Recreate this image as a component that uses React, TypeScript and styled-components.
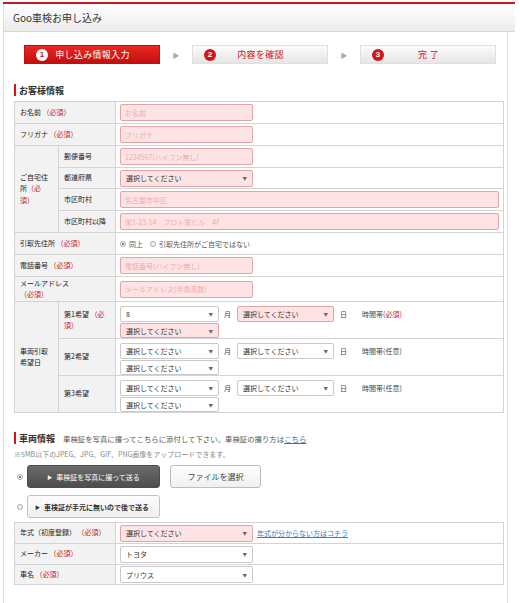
import styled, { createGlobalStyle } from "styled-components";

const GlobalStyle = createGlobalStyle`
  html, body { margin: 0; padding: 0; background: #fff; }
  body {
    font-family: "Noto Sans CJK JP", "Noto Sans", sans-serif;
    color: #333;
  }
  * { box-sizing: border-box; }
`;

const Page = styled.div`
  padding: 2px 0 0 3px;
`;

const Frame = styled.div`
  width: 512px;
  border-top: 2px solid #c9171e;
`;

const Header = styled.div`
  height: 28px;
  display: flex;
  align-items: center;
  padding-left: 9px;
  font-size: 10px;
  color: #333;
  background: linear-gradient(#ffffff, #ececec);
  border-left: 1px solid #ddd;
  border-bottom: 1px solid #d8d8d8;
`;

const Body = styled.div`
  width: 505px;
  min-height: 580px;
  padding: 13px 0 20px 10px;
  border-left: 1px solid #ddd;
  border-right: 1px solid #e2e2e2;
`;

const Steps = styled.div`
  display: flex;
  align-items: center;
  padding-left: 10px;
`;

const Step = styled.div<{ $active?: boolean }>`
  width: 136px;
  height: 19px;
  display: flex;
  align-items: center;
  padding: 0 22px 0 11px;
  font-size: 9px;
  color: ${(p) => (p.$active ? "#fff" : "#d3141b")};
  background: ${(p) =>
    p.$active
      ? "linear-gradient(#e8291f, #c30e10)"
      : "linear-gradient(#fbfbfb, #e6e6e6)"};
  border: 1px solid ${(p) => (p.$active ? "#c30e10" : "#e0e0e0")};
`;

const StepNum = styled.span<{ $active?: boolean }>`
  width: 12px;
  height: 12px;
  border-radius: 50%;
  flex: none;
  display: flex;
  align-items: center;
  justify-content: center;
  font-size: 8px;
  font-weight: bold;
  font-family: "Liberation Sans", sans-serif;
  background: ${(p) => (p.$active ? "#fff" : "#d3141b")};
  color: ${(p) => (p.$active ? "#d3141b" : "#fff")};
`;

const StepText = styled.span`
  flex: 1;
  text-align: center;
  letter-spacing: 0.3px;
`;

const StepArrow = styled.span`
  width: 32px;
  text-align: center;
  font-size: 7px;
  color: #aaa;
`;

const SectionTitle = styled.div<{ $big?: boolean }>`
  display: flex;
  align-items: center;
  height: 12px;
  margin-top: ${(p) => (p.$big ? "19px" : "20px")};
  margin-bottom: 5px;
  padding-left: 3px;
  border-left: 2px solid #d3141b;
  font-size: 9px;
  font-weight: bold;
  color: #333;
`;

const TitleNote = styled.span`
  margin-left: 8px;
  font-size: 7.4px;
  font-weight: normal;
  color: #555;
`;

const Link = styled.a`
  color: #2a6fb5;
  text-decoration: underline;
  cursor: pointer;
`;

const Table = styled.table`
  width: 490px;
  table-layout: fixed;
  border-collapse: collapse;
  border: 1px solid #d0d0d0;
  font-size: 7px;
`;

const Row = styled.tr<{ $h: number }>`
  height: ${(p) => p.$h}px;
`;

const Th = styled.th`
  background: #f2f2f2;
  border: 1px solid #d4d4d4;
  padding: 0 5px;
  text-align: left;
  font-weight: normal;
  color: #222;
  line-height: 1.6;
  vertical-align: middle;
`;

const Td = styled.td<{ $top?: boolean }>`
  border: 1px solid #d4d4d4;
  padding: ${(p) => (p.$top ? "4px 4px 0" : "0 4px")};
  vertical-align: ${(p) => (p.$top ? "top" : "middle")};
`;

const Req = styled.span`
  color: #c8161d;
`;

const Input = styled.input<{ $wide?: boolean }>`
  display: block;
  width: ${(p) => (p.$wide ? "379px" : "133px")};
  height: 17px;
  padding: 0 4px;
  border: 1px solid #e2a4a4;
  border-radius: 2px;
  background: #fde3e3;
  font-size: 7px;
  font-family: inherit;
  color: #333;
  outline: none;
  &::placeholder {
    color: #eeadad;
  }
`;

const Select = styled.div<{ $w: number; $pink?: boolean; $h?: number }>`
  width: ${(p) => p.$w}px;
  height: ${(p) => p.$h ?? 17}px;
  display: flex;
  align-items: center;
  justify-content: space-between;
  padding: 0 5px;
  border: 1px solid ${(p) => (p.$pink ? "#e2a4a4" : "#c9c9c9")};
  border-radius: 2px;
  background: ${(p) => (p.$pink ? "#fde3e3" : "#fff")};
  font-size: 7px;
  color: #333;
  flex: none;
`;

const Caret = styled.span`
  font-size: 4.5px;
  color: #666;
`;

const InlineRow = styled.div`
  display: flex;
  align-items: center;
`;

const Stack = styled.div`
  display: flex;
  flex-direction: column;
  gap: 1px;
`;

const Unit = styled.span<{ $ml: number; $mr?: number }>`
  margin-left: ${(p) => p.$ml}px;
  margin-right: ${(p) => p.$mr ?? 0}px;
  font-size: 7px;
  color: #444;
`;

const RadioGroup = styled.div`
  display: flex;
  align-items: center;
  gap: 3px;
  font-size: 7px;
  color: #555;
`;

const Radio = styled.span<{ $checked?: boolean }>`
  width: 6px;
  height: 6px;
  border-radius: 50%;
  flex: none;
  border: 1px solid #aaa;
  background: ${(p) =>
    p.$checked ? "radial-gradient(circle, #888 0 1.3px, #fff 1.6px)" : "#f4f4f4"};
`;

const RadioLabel = styled.span`
  margin-right: 4px;
`;

const Note = styled.div`
  font-size: 7px;
  color: #888;
  height: 10px;
  line-height: 10px;
`;

const UploadRow = styled.div<{ $mt: number }>`
  display: flex;
  align-items: center;
  margin-top: ${(p) => p.$mt}px;
  padding-left: 3px;
`;

const UploadButton = styled.div<{ $dark?: boolean }>`
  width: 133px;
  height: 23px;
  margin-left: 4px;
  display: flex;
  align-items: center;
  justify-content: ${(p) => (p.$dark ? "center" : "flex-start")};
  padding-left: ${(p) => (p.$dark ? "0" : "7px")};
  gap: 4px;
  border-radius: 3px;
  font-size: 7px;
  font-weight: ${(p) => (p.$dark ? "normal" : "bold")};
  color: ${(p) => (p.$dark ? "#fff" : "#333")};
  background: ${(p) =>
    p.$dark ? "linear-gradient(#6b6b6b, #4d4d4d)" : "linear-gradient(#fdfdfd, #efefef)"};
  border: 1px solid ${(p) => (p.$dark ? "#4d4d4d" : "#c2c2c2")};
`;

const Tri = styled.span`
  font-size: 5px;
`;

const FileButton = styled.div`
  width: 91px;
  height: 23px;
  margin-left: 10px;
  display: flex;
  align-items: center;
  justify-content: center;
  border: 1px solid #bdbdbd;
  border-radius: 3px;
  background: linear-gradient(#ffffff, #efefef);
  font-size: 8px;
  color: #444;
`;

const YearLink = styled(Link)`
  margin-left: 4px;
  font-size: 7px;
  color: #3b7bbf;
`;

const Table2 = styled(Table)`
  margin-top: 4px;
`;

type HopeProps = {
  label: React.ReactNode;
  required?: boolean;
  h: number;
  lead?: React.ReactNode;
};

const HopeRow = ({ label, required, h, lead }: HopeProps) => (
  <Row $h={h}>
    {lead}
    <Th>{label}</Th>
    <Td $top>
      <Stack>
        <InlineRow>
          <Select $w={99} $h={16}>
            {required ? "8" : "選択してください"}
            <Caret>▼</Caret>
          </Select>
          <Unit $ml={5} $mr={6}>月</Unit>
          <Select $w={97} $h={16} $pink={required}>
            選択してください<Caret>▼</Caret>
          </Select>
          <Unit $ml={6}>日</Unit>
          <Unit $ml={15}>
            時間帯{required ? <Req>(必須)</Req> : "(任意)"}
          </Unit>
        </InlineRow>
        <Select $w={99} $h={15} $pink={required}>
          選択してください<Caret>▼</Caret>
        </Select>
      </Stack>
    </Td>
  </Row>
);

const App = () => {
  return (
    <>
      <GlobalStyle />
      <Page>
        <Frame>
          <Header>Goo車検お申し込み</Header>
          <Body>
            <Steps>
              <Step $active>
                <StepNum $active>1</StepNum>
                <StepText>申し込み情報入力</StepText>
              </Step>
              <StepArrow>▶</StepArrow>
              <Step>
                <StepNum>2</StepNum>
                <StepText>内容を確認</StepText>
              </Step>
              <StepArrow>▶</StepArrow>
              <Step>
                <StepNum>3</StepNum>
                <StepText>完 了</StepText>
              </Step>
            </Steps>

            <SectionTitle>お客様情報</SectionTitle>
            <Table>
              <colgroup>
                <col style={{ width: 44 }} />
                <col style={{ width: 57 }} />
                <col />
              </colgroup>
              <tbody>
                <Row $h={22}>
                  <Th colSpan={2}>
                    お名前 <Req>（必須）</Req>
                  </Th>
                  <Td>
                    <Input placeholder="お名前" />
                  </Td>
                </Row>
                <Row $h={22}>
                  <Th colSpan={2}>
                    フリガナ <Req>（必須）</Req>
                  </Th>
                  <Td>
                    <Input placeholder="フリガナ" />
                  </Td>
                </Row>
                <Row $h={22}>
                  <Th rowSpan={4}>
                    ご自宅住
                    <br />所<Req>（必</Req>
                    <br />
                    <Req>須）</Req>
                  </Th>
                  <Th>郵便番号</Th>
                  <Td>
                    <Input placeholder="1234567(ハイフン無し)" />
                  </Td>
                </Row>
                <Row $h={21}>
                  <Th>都道府県</Th>
                  <Td>
                    <Select $w={133} $pink>
                      選択してください<Caret>▼</Caret>
                    </Select>
                  </Td>
                </Row>
                <Row $h={22}>
                  <Th>市区町村</Th>
                  <Td>
                    <Input $wide placeholder="名古屋市中区" />
                  </Td>
                </Row>
                <Row $h={22}>
                  <Th>市区町村以降</Th>
                  <Td>
                    <Input $wide placeholder="栄1-23-14　プロト栄ビル　4F" />
                  </Td>
                </Row>
                <Row $h={22}>
                  <Th colSpan={2}>
                    引取先住所 <Req>（必須）</Req>
                  </Th>
                  <Td>
                    <RadioGroup>
                      <Radio $checked />
                      <RadioLabel>同上</RadioLabel>
                      <Radio />
                      <RadioLabel>引取先住所がご自宅ではない</RadioLabel>
                    </RadioGroup>
                  </Td>
                </Row>
                <Row $h={22}>
                  <Th colSpan={2}>
                    電話番号 <Req>（必須）</Req>
                  </Th>
                  <Td>
                    <Input placeholder="電話番号(ハイフン無し)" />
                  </Td>
                </Row>
                <Row $h={25}>
                  <Th colSpan={2}>
                    メールアドレス
                    <br />
                    <Req>（必須）</Req>
                  </Th>
                  <Td>
                    <Input placeholder="メールアドレス(半角英数)" />
                  </Td>
                </Row>
                <HopeRow
                  h={37}
                  required
                  lead={
                    <Th rowSpan={3}>
                      車両引取
                      <br />
                      希望日
                    </Th>
                  }
                  label={
                    <>
                      第1希望 <Req>（必</Req>
                      <br />
                      <Req>須）</Req>
                    </>
                  }
                />
                <HopeRow h={36} label="第2希望" />
                <HopeRow h={36} label="第3希望" />
              </tbody>
            </Table>

            <SectionTitle $big>
              車両情報
              <TitleNote>
                車検証を写真に撮ってこちらに添付して下さい。車検証の撮り方は
                <Link>こちら</Link>
              </TitleNote>
            </SectionTitle>
            <Note>※5MB以下のJPEG、JPG、GIF、PNG画像をアップロードできます。</Note>
            <UploadRow $mt={6}>
              <Radio $checked />
              <UploadButton $dark>
                <Tri>▶</Tri>車検証を写真に撮って送る
              </UploadButton>
              <FileButton>ファイルを選択</FileButton>
            </UploadRow>
            <UploadRow $mt={7}>
              <Radio />
              <UploadButton>
                <Tri>▶</Tri>車検証が手元に無いので後で送る
              </UploadButton>
            </UploadRow>

            <Table2>
              <colgroup>
                <col style={{ width: 101 }} />
                <col />
              </colgroup>
              <tbody>
                <Row $h={21}>
                  <Th>
                    年式（初度登録） <Req>（必須）</Req>
                  </Th>
                  <Td>
                    <InlineRow>
                      <Select $w={133} $pink>
                        選択してください<Caret>▼</Caret>
                      </Select>
                      <YearLink>年式が分からない方はコチラ</YearLink>
                    </InlineRow>
                  </Td>
                </Row>
                <Row $h={21}>
                  <Th>
                    メーカー <Req>（必須）</Req>
                  </Th>
                  <Td>
                    <Select $w={133}>
                      トヨタ<Caret>▼</Caret>
                    </Select>
                  </Td>
                </Row>
                <Row $h={20}>
                  <Th>
                    車名 <Req>（必須）</Req>
                  </Th>
                  <Td>
                    <Select $w={133}>
                      プリウス<Caret>▼</Caret>
                    </Select>
                  </Td>
                </Row>
              </tbody>
            </Table2>
          </Body>
        </Frame>
      </Page>
    </>
  );
};

export default App;
